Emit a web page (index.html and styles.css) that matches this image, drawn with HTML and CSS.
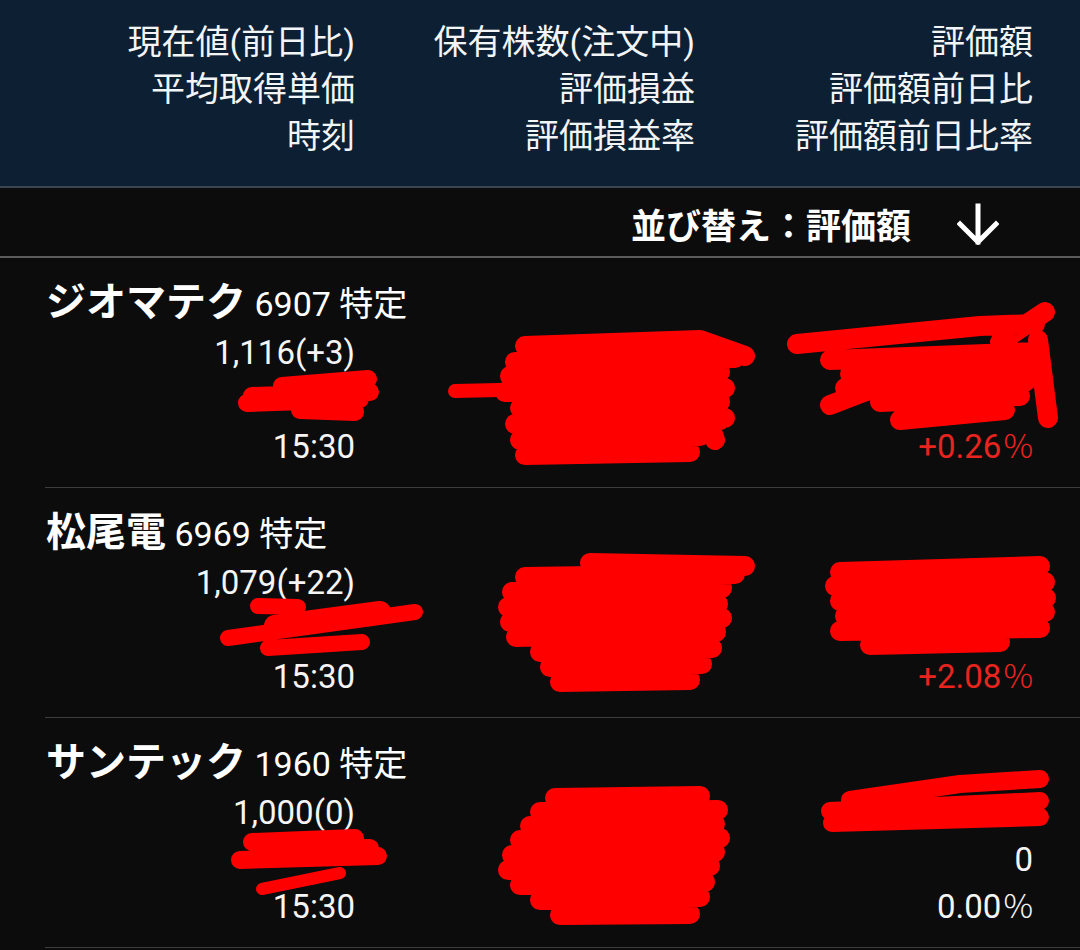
FILE: index.html
```html
<!DOCTYPE html>
<html lang="ja">
<head>
<meta charset="utf-8">
<title>保有株式</title>
<link rel="stylesheet" href="styles.css">
</head>
<body>
<header class="header">
  <div class="hcell">現在値(前日比)</div>
  <div class="hcell">保有株数(注文中)</div>
  <div class="hcell">評価額</div>
  <div class="hcell">平均取得単価</div>
  <div class="hcell">評価損益</div>
  <div class="hcell">評価額前日比</div>
  <div class="hcell">時刻</div>
  <div class="hcell">評価損益率</div>
  <div class="hcell">評価額前日比率</div>
</header>

<div class="sortbar">
  <span class="sort-label">並び替え：評価額</span>
  <svg class="sort-arrow" width="42" height="42" viewBox="0 0 42 42">
    <path d="M21 3 L21 39 M3 21 L21 39 L39 21" fill="none" stroke="#fff" stroke-width="5" stroke-linecap="square" stroke-linejoin="miter"/>
  </svg>
</div>

<section class="row">
  <div class="name">ジオマテク<span class="code"> 6907 特定</span></div>
  <div class="vals">
    <div>1,116(+3)</div><div></div><div></div>
    <div></div><div></div><div></div>
    <div>15:30</div><div></div><div class="up">+0.26<span class="pct">%</span></div>
  </div>
  <svg class="redact" viewBox="0 258 1080 230" width="1080" height="230">
    <g fill="none" stroke="#ff0000" stroke-linecap="round" stroke-linejoin="round">
      <path stroke-width="18" d="M247 403 L360 399 M282 386 L368 379 M300 410 L355 412 M252 396 L370 392"/>
      <path stroke-width="14" d="M455 391 L545 389"/>
      <path stroke-width="20" d="M525 346 L700 340 L745 356 M515 362 L735 358 M510 376 L720 372 M505 392 L725 388 M520 408 L720 402 M515 424 L725 418 M520 440 L700 436 M525 455 L690 452 M690 372 L715 440 M700 385 L720 420"/>
      <path stroke-width="20" d="M797 344 L980 326 L1035 324 M1000 342 L1045 312 M830 360 L1035 352 M850 374 L1030 366 M845 388 L1025 382 M830 405 L900 378 M880 402 L1020 396 M900 420 L1005 410 M1038 340 L1048 418"/>
    </g>
  </svg>
</section>

<section class="row">
  <div class="name">松尾電<span class="code"> 6969 特定</span></div>
  <div class="vals">
    <div>1,079(+22)</div><div></div><div></div>
    <div></div><div></div><div></div>
    <div>15:30</div><div></div><div class="up">+2.08<span class="pct">%</span></div>
  </div>
  <svg class="redact" viewBox="0 488 1080 230" width="1080" height="230">
    <g fill="none" stroke="#ff0000" stroke-linecap="round" stroke-linejoin="round">
      <path stroke-width="16" d="M228 638 L415 612 M258 606 L298 607 M268 648 L362 642"/>
      <path stroke-width="22" d="M275 626 L380 612"/>
      <path stroke-width="20" d="M590 563 L745 566 M525 577 L735 574 M512 592 L722 588 M508 607 L718 604 M510 622 L722 618 M516 637 L716 632 M540 652 L712 648 M550 667 L702 664 M560 682 L690 680"/>
      <path stroke-width="20" d="M840 572 L1040 566 M835 586 L1045 582 M840 601 L1046 598 M845 616 L1045 612 M840 631 L1040 628 M870 645 L1000 642"/>
    </g>
  </svg>
</section>

<section class="row">
  <div class="name">サンテック<span class="code"> 1960 特定</span></div>
  <div class="vals">
    <div>1,000(0)</div><div></div><div></div>
    <div></div><div></div><div>0</div>
    <div>15:30</div><div></div><div>0.00<span class="pct">%</span></div>
  </div>
  <svg class="redact" viewBox="0 718 1080 230" width="1080" height="230">
    <g fill="none" stroke="#ff0000" stroke-linecap="round" stroke-linejoin="round">
      <path stroke-width="18" d="M240 860 L378 856 M252 842 L355 838 M280 850 L370 848"/>
      <path stroke-width="12" d="M262 889 L340 873"/>
      <path stroke-width="20" d="M555 798 L700 796 M540 812 L718 810 M530 826 L715 824 M520 840 L720 838 M512 855 L715 852 M508 870 L710 866 M520 885 L705 882 M540 900 L700 897 M560 915 L690 914"/>
      <path stroke-width="18" d="M830 811 L1040 801 M832 823 L1040 817 M850 800 L960 784 L1040 779"/>
    </g>
  </svg>
</section>
</body>
</html>
```

FILE: styles.css
```css
html, body {
  margin: 0;
  padding: 0;
}

body {
  width: 1080px;
  background: #0c0c0c;
  color: #f5f5f5;
  font-family: Roboto, "Noto Sans CJK JP", sans-serif;
  overflow: hidden;
}

.header {
  box-sizing: border-box;
  height: 188px;
  padding-top: 19px;
  background: #0c1f33;
  border-bottom: 2px solid #3a4654;
  display: grid;
  grid-template-columns: 355px 340px 338px;
  grid-auto-rows: 47px;
  font-size: 34px;
  line-height: 47px;
  color: #f2f4f6;
}

.hcell {
  text-align: right;
  white-space: nowrap;
}

.sortbar {
  box-sizing: border-box;
  height: 70px;
  border-bottom: 2px solid #5c5c5c;
  display: flex;
  align-items: center;
  justify-content: flex-end;
  padding-right: 81px;
  gap: 46px;
}

.sort-label {
  font-family: "Noto Sans CJK JP", sans-serif;
  font-weight: 700;
  font-size: 35px;
  line-height: 40px;
  margin-top: 3px;
  color: #ffffff;
}

.sort-arrow {
  display: block;
  margin-top: 4px;
}

.row {
  position: relative;
  box-sizing: border-box;
  height: 230px;
  margin-left: 45px;
  padding-top: 17px;
  border-bottom: 1px solid #3d3d3d;
}

.name {
  margin-left: 1px;
  font-family: "Noto Sans CJK JP", sans-serif;
  font-weight: 700;
  font-size: 40px;
  line-height: 48px;
  white-space: nowrap;
  color: #ffffff;
}

.code {
  font-family: Roboto, "Noto Sans CJK JP", sans-serif;
  font-weight: 400;
  font-size: 34px;
}

.vals {
  margin-top: 1px;
  display: grid;
  grid-template-columns: 310px 340px 338px;
  grid-auto-rows: 47px;
  font-size: 33px;
  line-height: 47px;
  text-align: right;
  white-space: nowrap;
}

.pct {
  font-family: "Noto Sans CJK JP", sans-serif;
  font-weight: 300;
  line-height: 1;
  margin-left: 2px;
}

.up {
  color: #e8241e;
}

.redact {
  position: absolute;
  left: -45px;
  top: 0;
  pointer-events: none;
}
```
